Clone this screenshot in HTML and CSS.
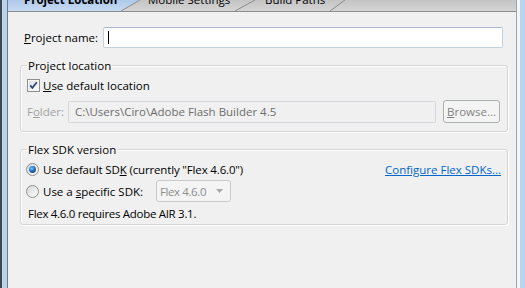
FILE: index.html
```html
<!DOCTYPE html>
<html>
<head>
    <title>New Flex Project</title>
    <link rel="stylesheet" href="styles.css">
</head>
<body>
    <div class="window">
        <div class="tabs">
            <div class="tab active"><span>Project Location</span></div>
            <svg class="slant" width="19" height="11" viewBox="0 0 19 11">
                <defs>
                    <linearGradient id="tabBlue" x1="0" y1="0" x2="0" y2="1">
                        <stop offset="0" stop-color="#b0c9ea"/>
                        <stop offset="1" stop-color="#c6daf2"/>
                    </linearGradient>
                </defs>
                <polygon points="0,0 19,0 0,11" fill="url(#tabBlue)"/>
                <line x1="0" y1="11" x2="19" y2="0" stroke="#8c8c8c"/>
            </svg>
            <div class="tab"><span>Mobile Settings</span></div>
            <svg class="slant" width="20" height="11" viewBox="0 0 20 11">
                <line x1="0" y1="11" x2="20" y2="0" stroke="#8c8c8c"/>
            </svg>
            <div class="tab build"><span>Build Paths</span></div>
            <svg class="slant" width="15" height="11" viewBox="0 0 15 11">
                <line x1="0" y1="11" x2="15" y2="0" stroke="#8c8c8c"/>
            </svg>
            <div class="tab-rest"></div>
        </div>

        <div class="page">
            <div class="name-row">
                <label class="name-label"><u>P</u>roject name:</label>
                <div class="textbox name-input"><span class="caret"></span></div>
            </div>

            <fieldset class="group location">
                <legend>Project location</legend>
                <div class="check-row">
                    <svg class="checkbox" width="13" height="13" viewBox="0 0 13 13">
                        <defs>
                            <linearGradient id="boxFill" x1="0" y1="0" x2="1" y2="1">
                                <stop offset="0" stop-color="#dcdedf"/>
                                <stop offset="1" stop-color="#fbfbfb"/>
                            </linearGradient>
                        </defs>
                        <rect x="0.5" y="0.5" width="12" height="12" fill="#f6f6f6" stroke="#8e8f8f"/>
                        <rect x="2" y="2" width="9" height="9" fill="url(#boxFill)"/>
                        <path d="M3.2 6.4 L5.4 8.9 L9.8 3.3" fill="none" stroke="#2c4877" stroke-width="1.8"/>
                    </svg>
                    <span><u>U</u>se default location</span>
                </div>
                <div class="folder-row">
                    <span class="folder-label">F<u>o</u>lder:</span>
                    <div class="textbox disabled folder-input">C:\Users\Ciro\Adobe Flash Builder 4.5</div>
                    <div class="btn disabled"><span><u>B</u>rowse...</span></div>
                </div>
            </fieldset>

            <fieldset class="group sdk">
                <legend>Flex SDK version</legend>
                <div class="radio-row first">
                    <svg class="radio" width="13" height="13" viewBox="0 0 13 13">
                        <defs>
                            <linearGradient id="radioFill" x1="0" y1="0" x2="1" y2="1">
                                <stop offset="0" stop-color="#d4d6d8"/>
                                <stop offset="1" stop-color="#fdfdfd"/>
                            </linearGradient>
                            <radialGradient id="radioDot" cx="0.4" cy="0.35" r="0.7">
                                <stop offset="0" stop-color="#8fd0ff"/>
                                <stop offset="0.45" stop-color="#2b7fd3"/>
                                <stop offset="1" stop-color="#0f3c78"/>
                            </radialGradient>
                        </defs>
                        <circle cx="6.5" cy="6.5" r="6" fill="url(#radioFill)" stroke="#8e8f8f"/>
                        <circle cx="6.5" cy="6.5" r="3.4" fill="url(#radioDot)"/>
                    </svg>
                    <span class="default-label">Use default SD<u>K</u> (currently "Flex 4.6.0")</span>
                    <a class="link">Configure Flex SDKs...</a>
                </div>
                <div class="radio-row second">
                    <svg class="radio" width="13" height="13" viewBox="0 0 13 13">
                        <circle cx="6.5" cy="6.5" r="6" fill="url(#radioFill)" stroke="#8e8f8f"/>
                    </svg>
                    <span class="specific-label">Use a <u>s</u>pecific SDK:</span>
                    <div class="combo disabled">
                        <span>Flex 4.6.0</span>
                        <svg class="arrow" width="7" height="4" viewBox="0 0 7 4">
                            <polygon points="0,0 7,0 3.5,4" fill="#a8a8a8"/>
                        </svg>
                    </div>
                </div>
                <p class="note">Flex 4.6.0 requires Adobe AIR 3.1.</p>
            </fieldset>
        </div>
    </div>
</body>
</html>
```

FILE: styles.css
```css
body {
    margin: 0;
    height: 288px;
    overflow: hidden;
    background: #bcd3ec;
    border-left: 2px solid #3f4953;
    font-family: "Open Sans", "Noto Sans", sans-serif;
    font-size: 11.5px;
    color: #000;
}
.window {
    margin-left: 5px;
    width: 508px;
    height: 288px;
    border-left: 1px solid #6f7c8a;
    border-right: 1px solid #a3a3a3;
    box-shadow: 3px 0 0 #f4f6f9;
    background: #f0f0f0;
}
.tabs {
    display: flex;
    height: 11px;
    overflow: hidden;
    border-bottom: 1px solid #8c8c8c;
    background: linear-gradient(#c4c4c4, #d4d4d4);
}
.tab {
    flex: none;
    height: 11px;
    box-sizing: border-box;
    white-space: nowrap;
    width: 95px;
    padding-left: 8px;
}
.tab span {
    display: block;
    line-height: 22px;
    margin-top: -11px;
}
.tab.active {
    width: 113px;
    padding-left: 16px;
    font-weight: bold;
    background: linear-gradient(#b0c9ea, #c6daf2);
}
.tab.build {
    width: 75px;
    padding-left: 10px;
}
.slant {
    flex: none;
    display: block;
}
.tab-rest {
    flex: 1;
}
.page {
    padding: 15px 0 0 12px;
}
.name-row {
    display: flex;
    align-items: center;
    padding-left: 4px;
}
.name-label {
    width: 79px;
}
.textbox {
    box-sizing: border-box;
    height: 21px;
    border: 1px solid #c3d0de;
    border-top-color: #a9b8ca;
    border-radius: 2px;
    background: #fff;
    display: flex;
    align-items: center;
}
.name-input {
    width: 400px;
}
.caret {
    display: block;
    width: 1px;
    height: 13px;
    margin-left: 4px;
    background: #000;
}
.group {
    margin: 10px 0 0 0;
    width: 488px;
    box-sizing: border-box;
    border: 1px solid #d5d5d5;
    border-radius: 3px;
    padding: 0 6px 8px 6px;
    box-shadow: inset 1px 1px 0 #fff, 1px 1px 0 #fff;
}
.group legend {
    padding: 0 1px;
    line-height: 15px;
}
.group.sdk {
    margin-top: 10px;
    padding-bottom: 3px;
}
.check-row {
    display: flex;
    align-items: center;
    gap: 3px;
    height: 15px;
    margin-top: 5px;
}
.folder-row {
    display: flex;
    align-items: center;
    height: 23px;
    margin-top: 7px;
}
.folder-label {
    width: 41px;
    color: #a0a0a0;
}
.textbox.disabled {
    background: #f0f0f0;
    border-color: #d2d6da;
    color: #6d6d6d;
}
.folder-input {
    width: 368px;
    height: 22px;
    padding-left: 6px;
}
.btn {
    margin-left: 7px;
    width: 57px;
    height: 23px;
    box-sizing: border-box;
    border: 1px solid #adb2b5;
    border-radius: 3px;
    background: #f4f4f4;
    color: #838383;
    display: flex;
    align-items: center;
    justify-content: center;
}
.radio-row {
    display: flex;
    align-items: center;
    gap: 4px;
}
.radio {
    margin-left: -1px;
    flex: none;
}
.radio-row.first {
    height: 15px;
    margin-top: 5px;
}
.radio-row.second {
    height: 22px;
    margin-top: 3px;
}
.default-label {
    letter-spacing: -0.15px;
}
.link {
    margin-left: auto;
    color: #0066cc;
    text-decoration: underline;
}
.specific-label {
    width: 109px;
}
.combo {
    width: 75px;
    height: 22px;
    box-sizing: border-box;
    border: 1px solid #c9c9c9;
    border-radius: 3px;
    background: #f4f4f4;
    color: #8d8d8d;
    display: flex;
    align-items: center;
    padding-left: 3px;
    letter-spacing: -0.4px;
}
.combo .arrow {
    margin-left: auto;
    margin-right: 7px;
}
.note {
    margin: 4px 0 0 1px;
    line-height: 15px;
    letter-spacing: -0.3px;
}
```
